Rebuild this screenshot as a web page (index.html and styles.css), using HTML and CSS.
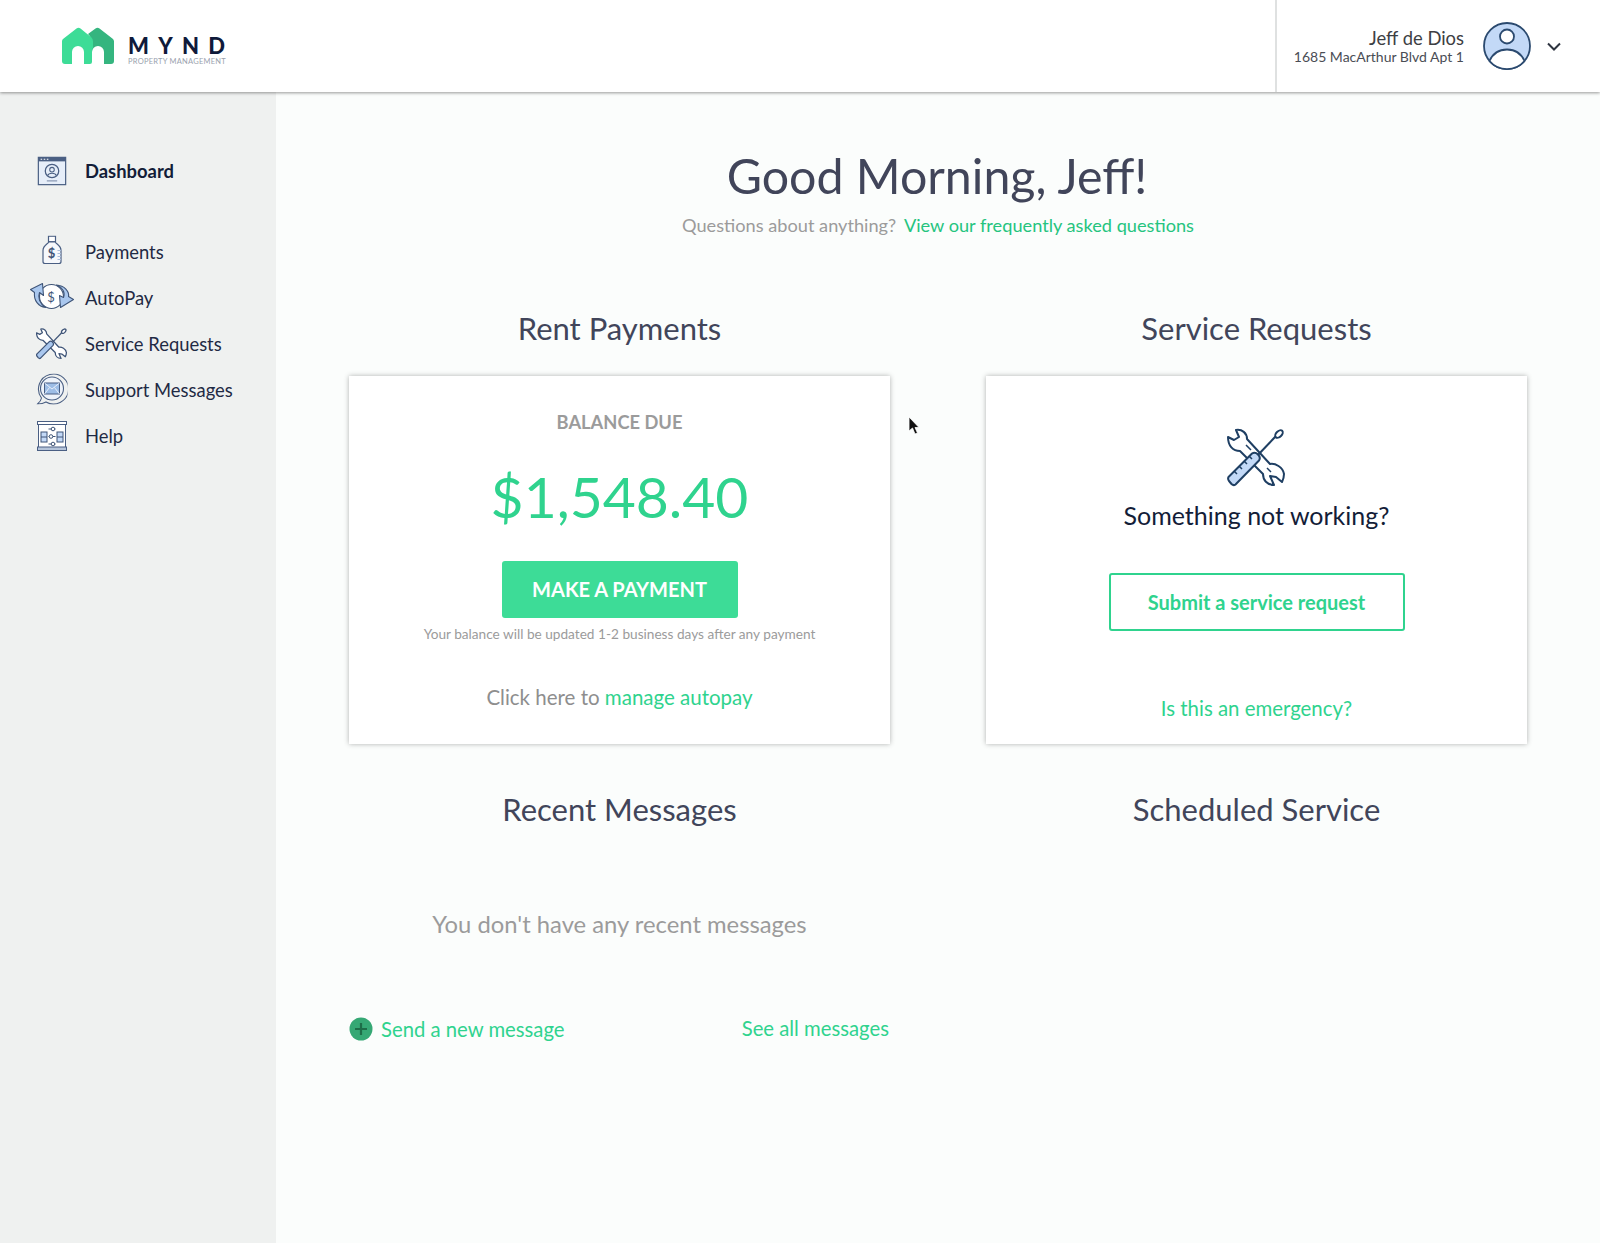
FILE: index.html
```html
<!DOCTYPE html>
<html lang="en">
<head>
<meta charset="utf-8">
<title>MYND Dashboard</title>
<link rel="stylesheet" href="styles.css">
</head>
<body>
<header class="topbar">
  <a class="brand">
    <svg class="brand-mark" viewBox="0 0 54 38">
      <path fill="#35b57f" d="M27 7 34.500 1.500Q36.500 0 38.500 1.500L52 12Q53 13 53 14.500V34a3 3 0 0 1-3 3H43V25a6 6 0 0 0-12 0V15Q31 11 27 7z"/>
      <path fill="#3ddc97" d="M1 14.500Q1 12.800 2 12L15.500 1.500Q17.500 0 19.500 1.500L30.500 10.500Q32 12 32 14.500V20.500Q31 22.500 31 25V35a2 2 0 0 1-2 2H23V25a6 6 0 0 0-12 0V37H4a3 3 0 0 1-3-3z"/>
    </svg>
    <span class="brand-text">
      <span class="brand-name">MYND</span>
      <span class="brand-sub">PROPERTY MANAGEMENT</span>
    </span>
  </a>
  <div class="account">
    <div class="account-text">
      <div class="account-name">Jeff de Dios</div>
      <div class="account-addr">1685 MacArthur Blvd Apt 1</div>
    </div>
    <svg class="avatar" viewBox="0 0 48 48">
      <circle cx="24" cy="24" r="23" fill="#c3d9f7" stroke="#2b4a6f" stroke-width="1.800"/>
      <path d="M6.500 39C10 31 16 27.500 24 27.500S38 31 41.500 39A23 23 0 0 1 6.500 39z" fill="#fff" stroke="#2b4a6f" stroke-width="1.800"/>
      <circle cx="24" cy="14.500" r="7" fill="#fff" stroke="#2b4a6f" stroke-width="1.800"/>
    </svg>
    <svg class="chevron" viewBox="0 0 14 9"><path d="M1 1.500 7 7.500 13 1.500" fill="none" stroke="#2e3440" stroke-width="2"/></svg>
  </div>
</header>
<div class="shell">
  <nav class="sidebar">
    <a class="nav-item nav-active nav-first">
      <span class="nav-icon"><svg viewBox="0 0 28 28" width="29" height="29"><rect x=".7" y=".7" width="26.600" height="26.600" fill="#e6eef9" stroke="#4a5f83" stroke-width="1.400"/><rect x=".7" y=".7" width="26.600" height="4" fill="#4a5f83"/><path d="M3 2.700h1.500M6 2.700h1.500M9 2.700h1.500" stroke="#fff" stroke-width="1"/><circle cx="14" cy="14" r="6.500" fill="none" stroke="#4a5f83" stroke-width="1.200"/><circle cx="14" cy="12.700" r="2.200" fill="none" stroke="#4a5f83"/><path d="M9.800 18.300c1-2.800 7.400-2.800 8.400 0" fill="none" stroke="#4a5f83"/><path d="M9 23.500h10" stroke="#8a99b3" stroke-width="1.200"/></svg></span>
      Dashboard
    </a>
    <a class="nav-item nav-group">
      <span class="nav-icon nav-icon-up"><svg viewBox="0 0 20 29" width="20" height="29"><rect x="6.500" y=".7" width="7" height="5.500" fill="#fff" stroke="#4a5f83" stroke-width="1.200"/><path d="M7 6.500C5 9 1 10 1 15V26Q1 28 3 28H17Q19 28 19 26V15C19 10 15 9 13 6.500z" fill="#f6f8fb" stroke="#4a5f83" stroke-width="1.200"/><path d="M15.500 15H19M15.500 18H19M15.500 21H19M15.500 24H19" stroke="#a9bedc" stroke-width="1"/><text x="9.500" y="22.500" font-size="13" font-family="Lato" font-weight="700" fill="#3f5578" text-anchor="middle">$</text></svg></span>
      Payments
    </a>
    <a class="nav-item">
      <span class="nav-icon nav-icon-up"><svg viewBox="0 0 45 27" width="45" height="27"><circle cx="22" cy="14" r="12" fill="#fff" stroke="#3f5578" stroke-width="1.100"/><path d="M1 7 13 1 14 13 10 10C8 15 10 21 16 25 9 24 4 18 5 10z" fill="#a9c7ee" stroke="#3f5578" stroke-width="1.100" stroke-linejoin="round"/><path d="M44 17 31 25 30 13 34 15C36 10 33 5 27 2.500 35 3 40 9 39 14z" fill="#a9c7ee" stroke="#3f5578" stroke-width="1.100" stroke-linejoin="round"/><text x="21.500" y="19" font-size="13" font-family="Lato" fill="#3f5578" text-anchor="middle">$</text></svg></span>
      AutoPay
    </a>
    <a class="nav-item">
      <span class="nav-icon"><svg viewBox="0 0 60 60" width="32" height="32"><g fill="none" stroke="#3f5578" stroke-width="2.400" stroke-linejoin="round"><path d="M9 2C15 1 20 5 20 11L43 36C48 35 56 39 57 46Q57 50 55 54L49 49 43 48 47 57C40 57 36 52 36 46L13 23C6 23 1 18 1 9L7 12 12 9z" fill="#fff"/><path d="M30 28 49 8"/><ellipse cx="52" cy="6" rx="3" ry="5" transform="rotate(45 52 6)" fill="#fff"/><path d="M1.500 49 25 25.500Q28 23.500 31 26.500 34 29.500 32 32.500L8.500 56.500Q6.500 58 4.500 56L2 53Q.5 51 1.500 49z" fill="#a9c7ee"/></g></svg></span>
      Service Requests
    </a>
    <a class="nav-item">
      <span class="nav-icon nav-icon-up-sm"><svg viewBox="0 0 31 31" width="31" height="31"><path d="M5 24.500A15 15 0 1 1 9.500 28.500C7 30 4 30.500 1 30.500 3 29 4.500 27 5 24.500z" fill="none" stroke="#4a5f83" stroke-width="1.100"/><circle cx="15.500" cy="15" r="11.500" fill="#eef3fa" stroke="#4a5f83" stroke-width="1.100"/><rect x="8" y="9.500" width="15" height="11" fill="#9dbde6" stroke="#4a5f83" stroke-width="1"/><path d="M8 9.500 15.500 15.500 23 9.500M8 20.500 13 14M23 20.500 18 14" fill="none" stroke="#eef3fa" stroke-width=".9"/></svg></span>
      Support Messages
    </a>
    <a class="nav-item">
      <span class="nav-icon"><svg viewBox="0 0 30 30" width="30" height="30"><rect x="1.500" y="3" width="27" height="23.500" fill="#fff" stroke="#4a5f83" stroke-width="1"/><rect x=".5" y=".5" width="29" height="3" fill="#fff" stroke="#4a5f83" stroke-width="1"/><rect x=".5" y="26" width="29" height="3.500" fill="#b5c4da" stroke="#4a5f83" stroke-width="1"/><rect x="4" y="11" width="6" height="10" fill="#c3d9f7" stroke="#3f5578"/><rect x="20" y="11" width="6" height="10" fill="#c3d9f7" stroke="#3f5578"/><path d="M4 16h6M20 16h6M11.500 8h7M11.500 15.500h7M11.500 23h7" stroke="#3f5578" fill="none"/><circle cx="16" cy="8" r="1.800" fill="#fff" stroke="#3f5578"/><circle cx="14" cy="15.500" r="1.800" fill="#fff" stroke="#3f5578"/><circle cx="16" cy="23" r="1.800" fill="#fff" stroke="#3f5578"/></svg></span>
      Help
    </a>
  </nav>
  <main class="content">
    <section class="hero">
      <h1>Good Morning, Jeff!</h1>
      <p class="hero-sub">Questions about anything? <a class="link hero-link">View our frequently asked questions</a></p>
    </section>
    <section class="grid">
      <div class="col">
        <h2>Rent Payments</h2>
        <div class="card card-rent">
          <div class="balance-label">BALANCE DUE</div>
          <div class="balance">$1,548.40</div>
          <a class="btn-primary">MAKE A PAYMENT</a>
          <div class="fine">Your balance will be updated 1-2 business days after any payment</div>
          <div class="autopay">Click here to <a class="link">manage autopay</a></div>
        </div>
      </div>
      <div class="col">
        <h2>Service Requests</h2>
        <div class="card card-service">
          <svg class="tools" viewBox="0 0 60 60">
            <g fill="none" stroke="#1f3f63" stroke-width="2" stroke-linejoin="round">
              <path d="M9 2C15 1 20 5 20 11L43 36C48 35 56 39 57 46Q57 50 55 54L49 49 43 48 47 57C40 57 36 52 36 46L13 23C6 23 1 18 1 9L7 12 12 9z" fill="#fff"/>
              <path d="M19 17 24 22M40 40 44 44" stroke-width="1.500"/>
              <path d="M30 28 49 8"/>
              <ellipse cx="52" cy="6" rx="2.800" ry="4.500" transform="rotate(45 52 6)" fill="#fff"/>
              <path d="M1.500 49 25 25.500Q28 23.500 31 26.500 34 29.500 32 32.500L8.500 56.500Q6.500 58 4.500 56L2 53Q.5 51 1.500 49z" fill="#c3d9f7"/>
              <path d="M7 43l3 3M12 38l3 3M17 33l3 3M22 28l3 3" stroke-width="1.500"/>
            </g>
          </svg>
          <div class="service-title">Something not working?</div>
          <a class="btn-outline">Submit a service request</a>
          <a class="link emergency">Is this an emergency?</a>
        </div>
      </div>
      <div class="col">
        <h2>Recent Messages</h2>
        <p class="empty">You don't have any recent messages</p>
        <div class="msg-actions">
          <a class="link send"><span class="plus"><svg viewBox="0 0 24 24" width="24" height="24"><circle cx="12" cy="12" r="11.500" fill="#35a874"/><path d="M12 6v12M6 12h12" stroke="#1d6d48" stroke-width="2.200"/></svg></span>Send a new message</a>
          <a class="link see-all">See all messages</a>
        </div>
      </div>
      <div class="col">
        <h2>Scheduled Service</h2>
      </div>
    </section>
  </main>
</div>
<svg class="cursor" viewBox="0 0 12 20"><path d="M1 1v14l3.500-3 2.500 6 2.500-1-2.500-5.500H11z" fill="#111" stroke="#fff" stroke-width=".8"/></svg>
</body>
</html>
```
FILE: styles.css
```css
* { box-sizing: border-box; }
html, body { margin: 0; height: 100%; }
body {
  width: 1600px;
  height: 1243px;
  overflow: hidden;
  display: flex;
  flex-direction: column;
  font-family: Lato, "Noto Sans", sans-serif;
  color: #3d4155;
  background: #fbfdfc;
  position: relative;
}
a { text-decoration: none; }
.link { color: #2fd38e; }

.topbar {
  height: 92px;
  flex: none;
  display: flex;
  justify-content: space-between;
  background: #fff;
  box-shadow: 0 1px 3px rgba(0,0,0,.4);
  position: relative;
  z-index: 2;
}
.brand { display: flex; align-items: center; padding-left: 61px; gap: 13px; }
.brand-mark { width: 54px; height: 38px; margin-top: -1px; }
.brand-text { display: flex; flex-direction: column; margin-top: 9px; }
.brand-name { font-size: 22px; line-height: 22px; font-weight: 900; letter-spacing: 9.300px; color: #0f1a3a; }
.brand-sub { font-size: 7.500px; line-height: 9px; color: #9aa2ae; letter-spacing: .25px; }
.account {
  width: 325px;
  border-left: 2px solid #dfe1e1;
  display: flex;
  align-items: center;
  justify-content: flex-end;
  padding-right: 39px;
}
.account-text { text-align: right; margin-right: 19px; }
.account-name { margin-top: 1px; font-size: 18.400px; line-height: 20px; color: #3d4043; }
.account-addr { font-size: 14px; line-height: 17px; color: #4a4d55; }
.avatar { width: 48px; height: 48px; }
.chevron { width: 14px; height: 9px; margin-left: 16px; }

.shell { flex: 1; display: flex; min-height: 0; }
.sidebar { width: 276px; flex: none; background: #eff1f0; padding-top: 56px; }
.nav-item {
  display: flex;
  align-items: center;
  height: 46px;
  padding-left: 85px;
  position: relative;
  font-size: 18.400px;
  color: #1f2a44;
}
.nav-first { margin-bottom: 34.500px; }
.nav-active { font-weight: 700; color: #131d38; }
.nav-icon, .nav-icon-up, .nav-icon-up-sm {
  position: absolute;
  left: 52px;
  top: 50%;
  transform: translate(-50%, -50%);
  display: flex;
}
.nav-icon-up { margin-top: -2px; }
.nav-icon-up-sm { margin-top: -1px; }

.content { flex: 1; padding: 0 72px 0 73px; }
.hero { text-align: center; padding-top: 52px; margin-left: -1px; }
h1 { margin: 0 0 0 -2px; font-size: 48.300px; line-height: 62px; font-weight: 400; color: #41455a; }
.hero-sub { margin: 6px 0 0; font-size: 18.200px; line-height: 26px; color: #9b9b9b; }
.hero-link { margin-left: 3px; color: #25c47f; }
.grid { display: grid; grid-template-columns: 541px 541px; column-gap: 96px; margin-top: 68px; }
.col { text-align: center; }
h2 { margin: 0 0 26px; font-size: 31px; line-height: 44px; font-weight: 400; color: #41455a; }
.col:nth-child(n+3) h2 { margin-top: 43px; }
.card {
  height: 368px;
  background: #fff;
  box-shadow: 0 0 5px rgba(0,0,0,.3);
  display: flex;
  flex-direction: column;
  align-items: center;
}
.balance-label { margin-top: 34px; font-size: 18.300px; line-height: 24px; font-weight: 700; color: #9b9b9b; }
.balance { margin-top: 26px; font-size: 57px; line-height: 72px; color: #2fd38e; }
.btn-primary {
  margin-top: 29px;
  width: 236px;
  height: 57px;
  border-radius: 3px;
  background: #3ddc97;
  color: #fff;
  font-size: 20px;
  font-weight: 700;
  line-height: 57px;
}
.fine { margin-top: 7px; font-size: 13.650px; line-height: 18px; color: #9b9b9b; }
.autopay { margin-top: 41px; font-size: 20.500px; line-height: 26px; color: #8e8e8e; }
.tools { width: 60px; height: 60px; margin-top: 52px; }
.service-title { margin-top: 11px; font-size: 25px; line-height: 32px; color: #131d38; }
.btn-outline {
  margin-top: 42px;
  width: 296px;
  height: 58px;
  border: 2px solid #2fd38e;
  border-radius: 3px;
  color: #2fd38e;
  font-size: 20px;
  font-weight: 700;
  line-height: 54px;
}
.emergency { margin-top: 64px; font-size: 20.400px; line-height: 26px; }
.empty { margin: 76.500px 0 0; font-size: 23.800px; line-height: 32px; color: #9b9b9b; }
.msg-actions { display: flex; justify-content: space-between; margin-top: 77px; }
.send { display: flex; align-items: center; font-size: 20.300px; gap: 8px; }
.plus { display: flex; }
.see-all { font-size: 20.300px; padding-right: 1px; margin-top: -1px; }

.cursor { position: absolute; left: 908px; top: 416px; width: 12px; height: 20px; }
```
